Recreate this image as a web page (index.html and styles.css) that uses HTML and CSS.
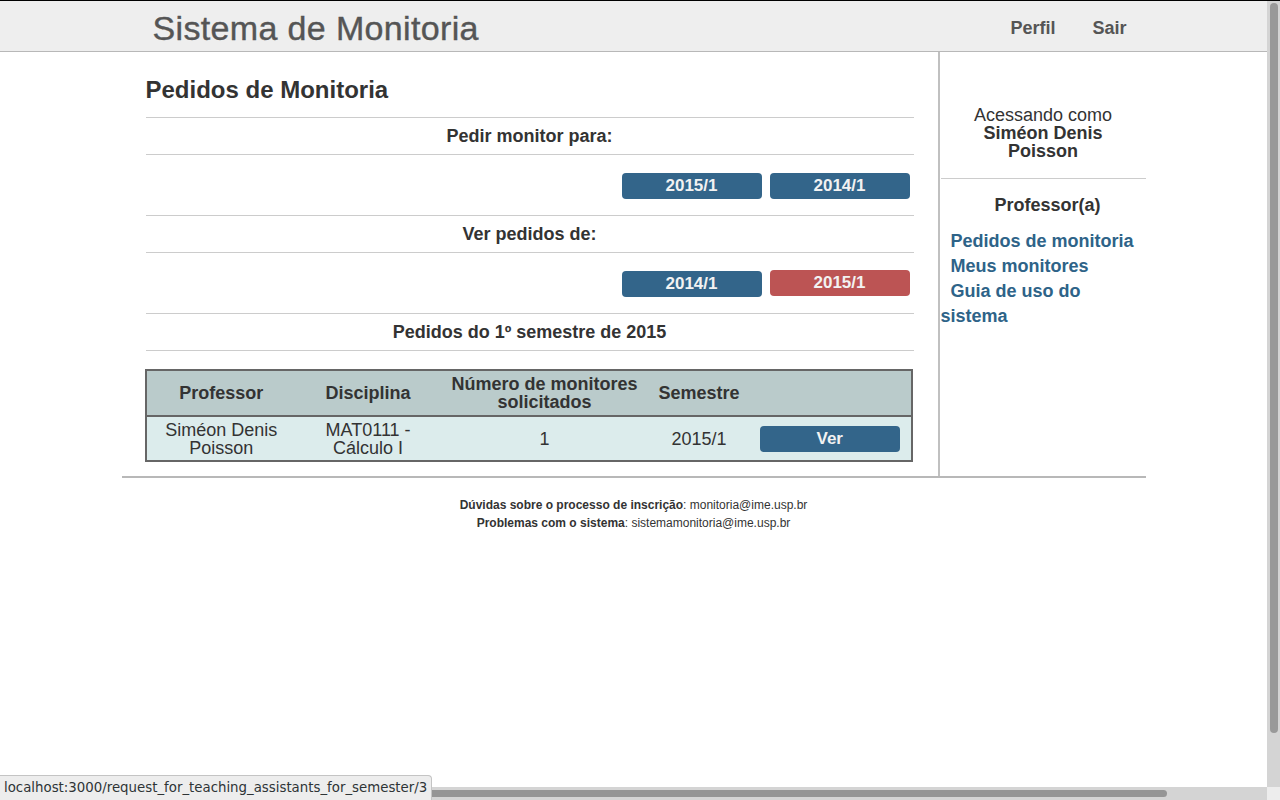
FILE: index.html
```html
<!DOCTYPE html>
<html lang="pt-BR">
<head>
<meta charset="utf-8">
<title>Sistema de Monitoria</title>
<link rel="stylesheet" href="styles.css">
</head>
<body>
<div class="page">
  <header class="topbar">
    <div class="topbar-inner">
      <span class="brand">Sistema de Monitoria</span>
      <nav class="topnav">
        <a href="#">Perfil</a>
        <a href="#">Sair</a>
      </nav>
    </div>
  </header>

  <div class="wrap">
    <main class="main">
      <h1 class="page-title">Pedidos de Monitoria</h1>

      <div class="subtitle">Pedir monitor para:</div>
      <div class="btn-row">
        <a class="btn" href="#">2015/1</a>
        <a class="btn" href="#">2014/1</a>
      </div>

      <div class="subtitle">Ver pedidos de:</div>
      <div class="btn-row">
        <a class="btn" href="#">2014/1</a>
        <a class="btn btn-active" href="#">2015/1</a>
      </div>

      <div class="subtitle">Pedidos do 1º semestre de 2015</div>

      <table class="requests">
        <colgroup>
          <col class="c1"><col class="c2"><col class="c3"><col class="c4"><col class="c5">
        </colgroup>
        <thead>
          <tr>
            <th>Professor</th>
            <th>Disciplina</th>
            <th>Número de monitores solicitados</th>
            <th>Semestre</th>
            <th></th>
          </tr>
        </thead>
        <tbody>
          <tr>
            <td>Siméon Denis Poisson</td>
            <td>MAT0111 - Cálculo I</td>
            <td>1</td>
            <td>2015/1</td>
            <td><a class="btn btn-view" href="#">Ver</a></td>
          </tr>
        </tbody>
      </table>
    </main>

    <aside class="sidebar">
      <div class="who"><p class="who-text">Acessando como<br><strong>Siméon Denis Poisson</strong></p></div>
      <div class="role">Professor(a)</div>
      <div class="links">
        <a href="#">Pedidos de monitoria</a><br>
        <a href="#">Meus monitores</a><br>
        <a href="#">Guia de uso do sistema</a>
      </div>
    </aside>
  </div>

  <footer class="footer">
    <div><strong>Dúvidas sobre o processo de inscrição</strong>: monitoria@ime.usp.br</div>
    <div><strong>Problemas com o sistema</strong>: sistemamonitoria@ime.usp.br</div>
  </footer>
</div>

<div class="topline"></div>
<div class="vscroll"><div class="vthumb"></div></div>
<div class="hscroll"><div class="hthumb"></div></div>
<div class="corner"></div>
<div class="status">localhost:3000/request_for_teaching_assistants_for_semester/3</div>
</body>
</html>
```

FILE: styles.css
```css
html, body {
  margin: 0;
  padding: 0;
  background: #fff;
}

body {
  font-family: "Liberation Sans", Arial, sans-serif;
  color: #333;
  overflow: hidden;
}

a {
  text-decoration: none;
}

.page {
  width: 1267px;
}

/* Header */
.topbar {
  background: #eeeeee;
  border-top: 1px solid #000;
  border-bottom: 1px solid #b8b8b8;
  height: 50px;
}

.topbar-inner {
  width: 1024px;
  margin: 0 auto;
  box-sizing: border-box;
  height: 50px;
  padding: 4px 19px 0 31px;
  display: flex;
  align-items: center;
  justify-content: space-between;
}

.brand {
  font-size: 34px;
  letter-spacing: 0.35px;
  color: #555;
  line-height: 40px;
  -webkit-text-stroke: 0.4px #555;
}

.topnav {
  display: flex;
  gap: 37px;
}

.topnav a {
  font-size: 18px;
  font-weight: bold;
  color: #555;
}

/* Layout */
.wrap {
  width: 1024px;
  margin: 0 auto;
  display: flex;
  align-items: stretch;
}

.main {
  width: 818px;
  box-sizing: border-box;
  padding: 24px 24px 14px 24px;
  border-right: 2px solid #c0c0c0;
}

.page-title {
  font-size: 24px;
  line-height: 28px;
  font-weight: bold;
  margin: 0 0 13px 0;
  color: #333;
}

.subtitle {
  border-top: 1px solid #ccc;
  border-bottom: 1px solid #ccc;
  height: 36px;
  line-height: 36px;
  text-align: center;
  font-size: 18px;
  font-weight: bold;
  color: #333;
}

.btn-row {
  height: 60px;
  box-sizing: border-box;
  padding: 18px 4px 0 0;
  display: flex;
  justify-content: flex-end;
  align-items: flex-start;
  gap: 8px;
}

.btn {
  display: inline-block;
  width: 140px;
  height: 26px;
  line-height: 26px;
  border-radius: 4px;
  background: #33658a;
  color: #f2f2f2;
  text-align: center;
  font-size: 17px;
  font-weight: bold;
}

.btn-active {
  background: #bc5454;
  margin-top: -1px;
}

/* Table */
.requests {
  margin-top: 18px;
  width: 768px;
  margin-left: -1px;
  border-collapse: collapse;
  border: 2px solid #666;
  font-size: 18px;
  line-height: 18px;
  color: #333;
  table-layout: fixed;
}

.requests col.c1 { width: 150px; }
.requests col.c2 { width: 144px; }
.requests col.c3 { width: 208px; }
.requests col.c4 { width: 100px; }
.requests col.c5 { width: 162px; }

.requests th {
  background: #bacbcb;
  font-weight: bold;
  text-align: center;
  padding: 4px 0;
  height: 36px;
  border-bottom: 2px solid #666;
}

.requests td {
  background: #dcecec;
  text-align: center;
  padding: 4px 0 3px;
  height: 36px;
}

.btn-view {
  vertical-align: middle;
}

/* Sidebar */
.sidebar {
  width: 206px;
  padding-top: 54px;
}

.who {
  border-bottom: 1px solid #ccc;
  margin-left: 1px;
}

.who-text {
  margin: 0;
  padding: 0 14px 18px;
  text-align: center;
  font-size: 18px;
  line-height: 18px;
  color: #333;
}

.role {
  text-align: center;
  font-size: 18px;
  line-height: 18px;
  font-weight: bold;
  margin-top: 17px;
  padding-left: 10px;
  color: #333;
}

.links {
  margin-top: 15px;
  padding-left: 1px;
  font-size: 18px;
  line-height: 25px;
  font-weight: bold;
}

.links a {
  color: #2e6388;
  margin-left: 10px;
}

/* Footer */
.footer {
  width: 1024px;
  margin: 0 auto;
  border-top: 2px solid #b8b8b8;
  padding-top: 18px;
  text-align: center;
  font-size: 12px;
  line-height: 18px;
  color: #333;
}

/* Browser chrome overlays */
.topline {
  position: fixed;
  top: 0;
  left: 0;
  width: 1280px;
  height: 1px;
  background: #000;
}

.vscroll {
  position: fixed;
  top: 1px;
  right: 0;
  width: 13px;
  height: 786px;
  background: #d4d4d4;
}

.vthumb {
  position: absolute;
  left: 3px;
  top: 2px;
  width: 8px;
  height: 730px;
  border-radius: 4px;
  background: #999;
}

.hscroll {
  position: fixed;
  left: 0;
  bottom: 0;
  width: 1267px;
  height: 13px;
  background: #d4d4d4;
}

.hthumb {
  position: absolute;
  left: 0;
  top: 3px;
  width: 1167px;
  height: 7px;
  border-radius: 4px;
  background: #959595;
}

.corner {
  position: fixed;
  right: 0;
  bottom: 0;
  width: 13px;
  height: 13px;
  background: #ededed;
}

.status {
  position: fixed;
  left: 0;
  bottom: 0;
  height: 24px;
  line-height: 24px;
  padding: 0 4px 0 4px;
  background: #ededed;
  border-top: 1px solid #c4c4c4;
  border-right: 1px solid #c4c4c4;
  border-top-right-radius: 4px;
  font-family: "DejaVu Sans", sans-serif;
  font-size: 13.33px;
  color: #2e3436;
}
```
